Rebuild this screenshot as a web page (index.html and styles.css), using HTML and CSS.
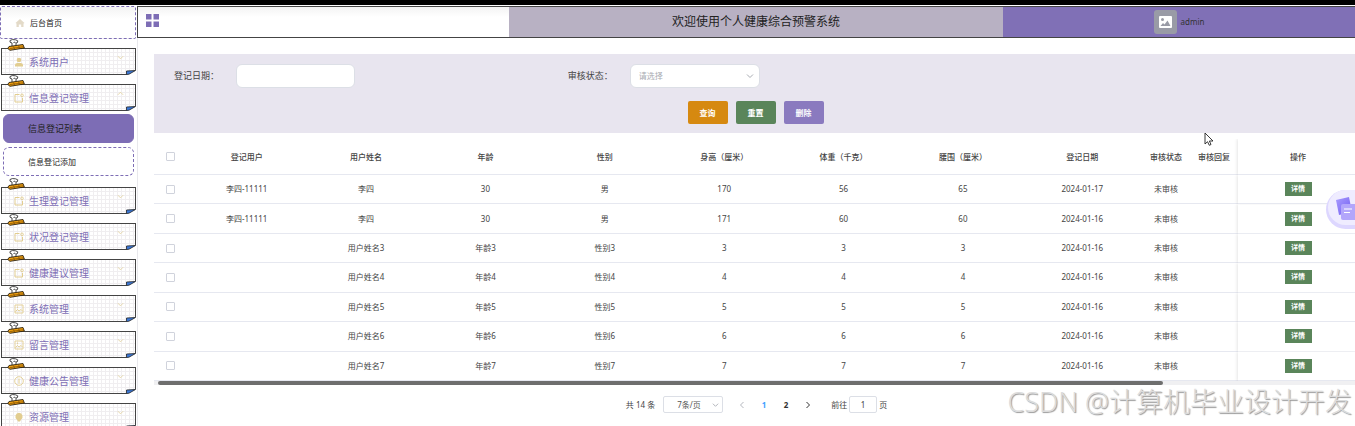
FILE: index.html
```html
<!DOCTYPE html>
<html lang="zh-CN">
<head>
    <meta charset="UTF-8">
    <meta name="viewport" content="width=device-width, initial-scale=1.0">
    <title>个人健康综合预警系统</title>
    <link rel="stylesheet" href="styles.css">
</head>
<body>
    <!-- Shared icons -->
    <svg class="sprite" aria-hidden="true">
        <symbol id="clip" viewBox="0 0 18 12">
            <path d="M5 7.500 L5 4 Q2 3.500 3 1.500 Q5 0 8.500 .8 Q12 1.500 10.500 3.500 L9 4 L9 6.500 M6.500 3.500 Q8 2.500 8.500 4" fill="#fff" stroke="#333" stroke-width=".9"/>
            <path d="M2 7.500 L16 5.500 L17.300 9 L3 11.300 L.8 9.500 Z" fill="#f0a010" stroke="#2a2010" stroke-width=".9"/>
            <path d="M6.500 7.500 L7.500 10 M11.500 6.500 L12.500 9.500 M2.500 9.700 L16.500 7.700" stroke="#6a4000" stroke-width=".6"/>
        </symbol>
        <symbol id="fold" viewBox="0 0 10 5">
            <path d="M0 5 L10 5 L10 0 Z" fill="#fff"/>
            <path d="M.5 1 L9.500 .5 L3 4.200 L.5 4.500 Z" fill="#3b78d8" stroke="#222" stroke-width=".8"/>
        </symbol>
        <symbol id="down" viewBox="0 0 8 8">
            <path d="M1 2.500 L4 5.500 L7 2.500" fill="none" stroke="currentColor"/>
        </symbol>
        <symbol id="up" viewBox="0 0 8 8">
            <path d="M1 5.500 L4 2.500 L7 5.500" fill="none" stroke="currentColor"/>
        </symbol>
        <symbol id="left" viewBox="0 0 8 8">
            <path d="M5.500 1 L2.500 4 L5.500 7" fill="none" stroke="currentColor"/>
        </symbol>
        <symbol id="right" viewBox="0 0 8 8">
            <path d="M2.500 1 L5.500 4 L2.500 7" fill="none" stroke="currentColor"/>
        </symbol>
        <symbol id="home" viewBox="0 0 10 10">
            <path d="M5 1 L9.500 5 L8.500 5.500 V9 H6.200 V6.500 H3.800 V9 H1.500 V5.500 L.5 5 Z" fill="currentColor"/>
        </symbol>
        <symbol id="user" viewBox="0 0 10 10">
            <circle cx="5" cy="3" r="2.300" fill="currentColor"/>
            <path d="M1 9.500 V8 Q1 6 3.500 6 H6.500 Q9 6 9 8 V9.500 Z" fill="currentColor"/>
        </symbol>
        <symbol id="note" viewBox="0 0 10 10">
            <path d="M5.500 1.500 H1 V9 H8.500 V4.800" fill="none" stroke="currentColor"/>
            <circle cx="8" cy="2.300" r="1.300" fill="none" stroke="currentColor" stroke-width=".9"/>
        </symbol>
        <symbol id="picture" viewBox="0 0 10 10">
            <path d="M1 1 H9 V9 H1 Z M1.500 7.500 L3.500 5.500 L5 7 L7 5.500 L8.500 7" fill="none" stroke="currentColor" stroke-width=".9"/>
            <circle cx="3.500" cy="3.300" r=".7" fill="currentColor"/>
        </symbol>
        <symbol id="info" viewBox="0 0 10 10">
            <circle cx="5" cy="5" r="4.300" fill="none" stroke="currentColor" stroke-width=".9"/>
            <path d="M5 2.500 V7.500" stroke="currentColor"/>
        </symbol>
        <symbol id="bulb" viewBox="0 0 10 10">
            <path d="M5 .8 A3.800 3.800 0 0 1 7 7.700 L6 9.500 H4 L3 7.700 A3.800 3.800 0 0 1 5 .8 Z" fill="currentColor"/>
        </symbol>
    </svg>

    <div class="topline"></div>
    <div class="app">
        <nav class="sidebar">
            <a class="home" href="#"><svg class="icon"><use href="#home"/></svg>后台首页</a>

            <a class="menu" href="#"><svg class="clip"><use href="#clip"/></svg><svg class="icon"><use href="#user"/></svg>系统用户<svg class="arrow"><use href="#down"/></svg><svg class="fold"><use href="#fold"/></svg></a>
            <a class="menu" href="#"><svg class="clip"><use href="#clip"/></svg><svg class="icon"><use href="#note"/></svg>信息登记管理<svg class="arrow"><use href="#up"/></svg><svg class="fold"><use href="#fold"/></svg></a>
            <div class="submenu">
                <a class="active" href="#">信息登记列表</a>
                <a href="#">信息登记添加</a>
            </div>
            <a class="menu" href="#"><svg class="clip"><use href="#clip"/></svg><svg class="icon"><use href="#note"/></svg>生理登记管理<svg class="arrow"><use href="#down"/></svg><svg class="fold"><use href="#fold"/></svg></a>
            <a class="menu" href="#"><svg class="clip"><use href="#clip"/></svg><svg class="icon"><use href="#note"/></svg>状况登记管理<svg class="arrow"><use href="#down"/></svg><svg class="fold"><use href="#fold"/></svg></a>
            <a class="menu" href="#"><svg class="clip"><use href="#clip"/></svg><svg class="icon"><use href="#note"/></svg>健康建议管理<svg class="arrow"><use href="#down"/></svg><svg class="fold"><use href="#fold"/></svg></a>
            <a class="menu" href="#"><svg class="clip"><use href="#clip"/></svg><svg class="icon"><use href="#picture"/></svg>系统管理<svg class="arrow"><use href="#down"/></svg><svg class="fold"><use href="#fold"/></svg></a>
            <a class="menu" href="#"><svg class="clip"><use href="#clip"/></svg><svg class="icon"><use href="#picture"/></svg>留言管理<svg class="arrow"><use href="#down"/></svg><svg class="fold"><use href="#fold"/></svg></a>
            <a class="menu" href="#"><svg class="clip"><use href="#clip"/></svg><svg class="icon"><use href="#info"/></svg>健康公告管理<svg class="arrow"><use href="#down"/></svg><svg class="fold"><use href="#fold"/></svg></a>
            <a class="menu" href="#"><svg class="clip"><use href="#clip"/></svg><svg class="icon"><use href="#bulb"/></svg>资源管理<svg class="arrow"><use href="#down"/></svg><svg class="fold"><use href="#fold"/></svg></a>
        </nav>

        <div class="content">
            <header class="header">
                <div class="header-left">
                    <button class="toggle" aria-label="菜单">
                        <svg width="13" height="13" viewBox="0 0 13 13"><path d="M0 0h5.500v5.500H0zM7.500 0H13v5.500H7.500zM0 7.500h5.500V13H0zM7.500 7.500H13V13H7.500z" fill="#7d6db5"/></svg>
                    </button>
                </div>
                <div class="header-title">欢迎使用个人健康综合预警系统</div>
                <div class="header-user">
                    <svg class="avatar" viewBox="0 0 23 24">
                        <rect width="23" height="24" rx="3" fill="#999ba6"/>
                        <rect x="5" y="6" width="13" height="12" rx="1" fill="#fff"/>
                        <circle cx="8.500" cy="9.500" r="1.500" fill="#999ba6"/>
                        <path d="M6.500 16 L9 13 L10.500 14.500 L13.500 10.500 L16.500 16 Z" fill="#999ba6"/>
                    </svg>
                    <span>admin</span>
                </div>
            </header>

            <main class="main">
                <form class="search">
                    <div class="fields">
                        <div class="field">
                            <label for="date">登记日期：</label>
                            <input id="date" type="text">
                        </div>
                        <div class="field">
                            <label for="state">审核状态：</label>
                            <div class="select">
                                <select id="state"><option>请选择</option></select>
                                <svg><use href="#down"/></svg>
                            </div>
                        </div>
                    </div>
                    <div class="buttons">
                        <button type="button" class="query">查询</button>
                        <button type="button" class="reset">重置</button>
                        <button type="button" class="delete">删除</button>
                    </div>
                </form>

                <table class="table">
                    <colgroup>
                        <col class="col-check">
                        <col span="8">
                        <col class="col-state" span="2">
                        <col class="col-action">
                    </colgroup>
                    <thead>
                        <tr>
                            <th><input type="checkbox" aria-label="全选"></th>
                            <th>登记用户</th><th>用户姓名</th><th>年龄</th><th>性别</th><th>身高（厘米）</th><th>体重（千克）</th><th>腰围（厘米）</th><th>登记日期</th><th>审核状态</th><th>审核回复</th>
                            <th class="fixed">操作</th>
                        </tr>
                    </thead>
                    <tbody>
                        <tr><td><input type="checkbox" aria-label="选择"></td><td>李四-11111</td><td>李四</td><td>30</td><td>男</td><td>170</td><td>56</td><td>65</td><td>2024-01-17</td><td>未审核</td><td></td><td class="fixed"><button>详情</button></td></tr>
                        <tr><td><input type="checkbox" aria-label="选择"></td><td>李四-11111</td><td>李四</td><td>30</td><td>男</td><td>171</td><td>60</td><td>60</td><td>2024-01-16</td><td>未审核</td><td></td><td class="fixed"><button>详情</button></td></tr>
                        <tr><td><input type="checkbox" aria-label="选择"></td><td></td><td>用户姓名3</td><td>年龄3</td><td>性别3</td><td>3</td><td>3</td><td>3</td><td>2024-01-16</td><td>未审核</td><td></td><td class="fixed"><button>详情</button></td></tr>
                        <tr><td><input type="checkbox" aria-label="选择"></td><td></td><td>用户姓名4</td><td>年龄4</td><td>性别4</td><td>4</td><td>4</td><td>4</td><td>2024-01-16</td><td>未审核</td><td></td><td class="fixed"><button>详情</button></td></tr>
                        <tr><td><input type="checkbox" aria-label="选择"></td><td></td><td>用户姓名5</td><td>年龄5</td><td>性别5</td><td>5</td><td>5</td><td>5</td><td>2024-01-16</td><td>未审核</td><td></td><td class="fixed"><button>详情</button></td></tr>
                        <tr><td><input type="checkbox" aria-label="选择"></td><td></td><td>用户姓名6</td><td>年龄6</td><td>性别6</td><td>6</td><td>6</td><td>6</td><td>2024-01-16</td><td>未审核</td><td></td><td class="fixed"><button>详情</button></td></tr>
                        <tr><td><input type="checkbox" aria-label="选择"></td><td></td><td>用户姓名7</td><td>年龄7</td><td>性别7</td><td>7</td><td>7</td><td>7</td><td>2024-01-16</td><td>未审核</td><td></td><td class="fixed"><button>详情</button></td></tr>
                    </tbody>
                </table>
                <div class="scrollbar"><div class="thumb"></div></div>

                <div class="pagination">
                    <span>共 14 条</span>
                    <div class="select size">
                        <select aria-label="每页条数"><option>7条/页</option></select>
                        <svg><use href="#down"/></svg>
                    </div>
                    <div class="pager">
                        <button class="disabled" aria-label="上一页"><svg><use href="#left"/></svg></button>
                        <button class="current">1</button>
                        <button>2</button>
                        <button aria-label="下一页"><svg><use href="#right"/></svg></button>
                    </div>
                    <div class="jump">
                        <label for="page">前往</label>
                        <input id="page" type="text" value="1">
                        <span>页</span>
                    </div>
                </div>
            </main>
        </div>
    </div>

    <svg class="widget" viewBox="0 0 30 44">
        <defs>
            <linearGradient id="card" x1="0" y1="0" x2="1" y2="1">
                <stop offset="0" stop-color="#a99bff"/>
                <stop offset="1" stop-color="#6f5cf0"/>
            </linearGradient>
        </defs>
        <rect x="1" y="3" width="60" height="39" rx="19.500" fill="#ddd7ff"/>
        <rect x="3" y="3" width="60" height="35" rx="17.500" fill="#efecff"/>
        <path d="M11 13 L24 10 L27 25 L14 28 Z" fill="url(#card)"/>
        <rect x="16" y="17" width="18" height="16" rx="2" fill="#b3a6fb"/>
        <path d="M19 22 H27 M19 25.500 H25" stroke="#fff" stroke-width="1.200"/>
    </svg>
    <svg class="cursor" viewBox="0 0 10 14">
        <path d="M1 1 V12 L3.500 9.700 L5.300 13.300 L7 12.500 L5.400 9 H9 Z" fill="#fff" stroke="#222" stroke-width=".9"/>
    </svg>
    <div class="watermark">CSDN @计算机毕业设计开发</div>
</body>
</html>
```
FILE: styles.css
```css
* {
    box-sizing: border-box;
}

body {
    margin: 0;
    height: 100vh;
    overflow: hidden;
    position: relative;
    background: #fff;
    color: #444;
    font-family: "Noto Sans", "Noto Sans CJK SC", sans-serif;
    font-size: 8px;
    line-height: 12px;
}

a {
    color: inherit;
    text-decoration: none;
}

button, input, select {
    font: inherit;
    color: inherit;
    margin: 0;
    padding: 0;
    border: 0;
    background: none;
}

.sprite {
    position: absolute;
    width: 0;
    height: 0;
}

.topline {
    height: 5px;
    background: #000;
}

.app {
    display: flex;
}

/* sidebar */
.sidebar {
    width: 138px;
    flex-shrink: 0;
    padding: 1px 1px 0 0;
    border-right: 1px solid #e8e8ec;
}

.icon {
    width: 10px;
    height: 10px;
    color: #e2cd90;
}

.home {
    display: flex;
    align-items: center;
    gap: 5px;
    height: 33px;
    padding-left: 14px;
    border: 1px dashed #7d6db5;
    border-radius: 2px;
    color: #222;
    background: linear-gradient(#f3f3f3, #fff 12px);
}

.home .icon {
    color: #e3dac8;
}

.menu {
    position: relative;
    display: flex;
    align-items: center;
    gap: 5px;
    height: 27px;
    margin: 9px 0 0 1px;
    padding: 1px 11px 0 12px;
    border: 1px solid #444;
    background:
        linear-gradient(90deg, #f0eef0 1px, transparent 1px) 3px 0 / 4px 4px,
        linear-gradient(#f0eef0 1px, transparent 1px) 0 3px / 4px 4px,
        #fff;
    color: #7d6db5;
    font-size: 10px;
}

.clip {
    position: absolute;
    left: 5px;
    top: -10px;
    width: 18px;
    height: 12px;
}

.arrow {
    width: 7px;
    height: 7px;
    margin: 0 0 10px auto;
    color: #e4d3a0;
}

.fold {
    position: absolute;
    right: -1px;
    bottom: -1px;
    width: 10px;
    height: 5px;
}

.submenu {
    display: flex;
    flex-direction: column;
    gap: 4px;
    padding: 3px 2px 2px 3px;
}

.submenu a {
    display: flex;
    align-items: center;
    height: 29px;
    padding-left: 24px;
    border: 1px dashed #7d6db5;
    border-radius: 6px;
    color: #222;
}

.submenu .active {
    border-style: solid;
    background: #7d6db5;
    font-size: 9px;
}

/* header */
.content {
    flex: 1;
    min-width: 0;
}

.header {
    display: flex;
    height: 32px;
    border: 1px solid #444;
    border-right: 0;
    margin-top: 1px;
    margin-left: -1px;
}

.header-left {
    flex: 371;
    background: linear-gradient(#f3f3f3, #fff 10px);
}

.toggle {
    display: block;
    margin: 7px 8px;
}

.header-title {
    flex: 494;
    display: flex;
    align-items: center;
    justify-content: center;
    background: #b8b1c3;
    color: #222;
    font-size: 12px;
}

.header-user {
    flex: 352;
    display: flex;
    align-items: center;
    justify-content: center;
    gap: 4px;
    background: #8070b6;
    color: #333;
}

.avatar {
    width: 23px;
    height: 24px;
}

/* search */
.main {
    padding: 16px 0 0 16px;
}

.search {
    padding: 10px 0 9px 20px;
    background: #e8e5ef;
}

.fields {
    display: grid;
    grid-template-columns: repeat(3, 1fr);
}

.field {
    display: flex;
    align-items: center;
}

.field label {
    width: 62px;
    font-size: 9px;
}

.field input, .select select {
    display: block;
    width: 119px;
    height: 24px;
    border: 1px solid #dcdfe6;
    border-radius: 6px;
    background: #fff;
}

.select {
    position: relative;
}

.select select {
    width: 130px;
    padding-left: 8px;
    appearance: none;
    color: #a8abb2;
}

.select svg {
    position: absolute;
    right: 6px;
    top: 50%;
    width: 8px;
    height: 8px;
    margin-top: -4px;
    color: #a8abb2;
}

.buttons {
    display: flex;
    justify-content: center;
    gap: 8px;
    margin: 13px 18px 0 0;
}

.buttons button {
    width: 40px;
    height: 23px;
    border-radius: 2px;
    color: #fff;
    font-weight: bold;
}

.buttons .query {
    background: #d68910;
}

.buttons .reset {
    background: #5a855a;
}

.buttons .delete {
    background: #8a7abf;
}

/* table */
.table {
    width: 100%;
    height: 242px;
    margin-top: 6px;
    table-layout: fixed;
    border-collapse: separate;
    border-spacing: 0;
    text-align: center;
}

.col-check {
    width: 33px;
}

.col-state {
    width: 48px;
}

.col-action {
    width: 117px;
}

.table th, .table td {
    height: 29px;
    padding: 0;
    border-bottom: 1px solid #e6e8f0;
}

.table th {
    height: 36px;
    font-weight: 500;
}

.table input {
    appearance: none;
    display: block;
    width: 9px;
    height: 9px;
    margin: 0 auto;
    border: 1px solid #d0d3dc;
    border-radius: 1px;
    background: #fff;
}

.table .fixed {
    box-shadow: -1px 0 3px rgba(0, 0, 0, .1);
    clip-path: inset(0 0 0 -5px);
    padding-left: 3px;
}

.table button {
    display: block;
    width: 27px;
    height: 14px;
    margin: 0 auto;
    background: #5a855a;
    color: #fff;
    font-size: 7px;
    font-weight: bold;
}

.scrollbar {
    height: 4px;
    padding-left: 4px;
    background: #f0f0f2;
}

.thumb {
    width: 84%;
    height: 4px;
    border-radius: 2px;
    background: #6e6e6e;
}

/* pagination */
.pagination {
    display: flex;
    align-items: center;
    justify-content: center;
    gap: 8px;
    margin-top: 11px;
    padding-left: 4px;
}

.size select {
    width: 60px;
    height: 17px;
    padding-left: 13px;
    border-radius: 2px;
    color: #555;
}

.size svg {
    right: 4px;
    width: 7px;
}

.pager {
    display: flex;
}

.pager button {
    width: 22px;
    height: 16px;
    font-weight: bold;
    color: #333;
}

.pager svg {
    display: block;
    width: 8px;
    height: 8px;
    margin: 0 auto;
}

.pager .disabled {
    color: #b4b7be;
}

.pager .current {
    color: #409eff;
}

.jump {
    display: flex;
    align-items: center;
    gap: 2px;
    margin-left: 4px;
}

.jump input {
    width: 28px;
    height: 17px;
    border: 1px solid #dcdfe6;
    border-radius: 2px;
    text-align: center;
}

/* floating parts */
.widget {
    position: absolute;
    right: 0;
    top: 187px;
    width: 30px;
    height: 44px;
}

.cursor {
    position: absolute;
    left: 1204px;
    top: 132px;
    width: 10px;
    height: 14px;
}

.watermark {
    position: absolute;
    right: 3px;
    bottom: 6px;
    color: #dcdcdc;
    font-size: 27px;
    font-weight: 300;
    line-height: 36px;
    text-shadow: 1px 1px 1px #999;
    white-space: nowrap;
}
```
